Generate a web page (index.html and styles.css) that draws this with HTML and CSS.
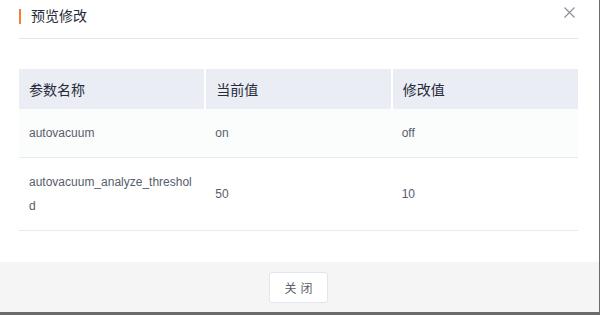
FILE: index.html
```html
<!DOCTYPE html>
<html lang="zh-CN">
<head>
  <meta charset="UTF-8" />
  <meta name="viewport" content="width=device-width, initial-scale=1.0" />
  <title>预览修改</title>
  <link rel="stylesheet" href="styles.css">
</head>
<body>
  <div class="dialog">
    <div class="dialog-header">
      <h2 class="dialog-title">预览修改</h2>
      <button class="close-btn" title="关闭">
        <svg width="11" height="11" viewBox="0 0 11 11">
          <path d="M0.5 0.5 L10.5 10.5 M10.5 0.5 L0.5 10.5" stroke="#8a8e99" stroke-width="1.1" fill="none" />
        </svg>
      </button>
    </div>

    <div class="dialog-body">
      <table class="param-table">
        <thead>
          <tr>
            <th>参数名称</th>
            <th>当前值</th>
            <th>修改值</th>
          </tr>
        </thead>
        <tbody>
          <tr class="hover">
            <td>autovacuum</td>
            <td>on</td>
            <td>off</td>
          </tr>
          <tr>
            <td>autovacuum_analyze_threshold</td>
            <td>50</td>
            <td>10</td>
          </tr>
        </tbody>
      </table>
    </div>

    <div class="dialog-footer">
      <button class="footer-btn">关闭</button>
    </div>
  </div>
</body>
</html>
```

FILE: styles.css
```css
body {
  margin: 0;
  background-color: #6b6b6b;
  font-family: 'Liberation Sans', 'Noto Sans CJK SC', sans-serif;
  color: #575d6c;
}

.dialog {
  width: 599px;
  height: 312px;
  background-color: #ffffff;
  display: flex;
  flex-direction: column;
}

.dialog-header {
  margin: 0 21px 0 19px;
  height: 38px;
  border-bottom: 1px solid #e3e5ea;
  display: flex;
  align-items: flex-start;
  justify-content: space-between;
}

.dialog-title {
  margin: 9px 0 0 0;
  padding-left: 10px;
  border-left: 2px solid #f6812f;
  font-size: 14px;
  font-weight: normal;
  line-height: 15px;
  height: 15px;
  color: #252b3a;
}

.close-btn {
  margin: 7px 3px 0 0;
  padding: 0;
  border: none;
  background: none;
  width: 11px;
  height: 11px;
  display: flex;
  cursor: pointer;
}

.dialog-body {
  flex-grow: 1;
  padding: 30px 21px 0 19px;
}

.param-table {
  width: 100%;
  table-layout: fixed;
  border-collapse: collapse;
}

.param-table th {
  height: 40px;
  padding: 0 10px;
  background-color: #eaedf4;
  border-left: 2px solid #ffffff;
  text-align: left;
  font-size: 14px;
  font-weight: normal;
  color: #252b3a;
}

.param-table th:first-child {
  border-left: none;
}

.param-table td {
  padding: 12px 10px;
  border-bottom: 1px solid #e8eaef;
  font-size: 12px;
  line-height: 24px;
  word-break: break-all;
  vertical-align: middle;
}

.param-table tr.hover td {
  background-color: #fbfcfc;
}

.dialog-footer {
  height: 50px;
  background-color: #f5f5f6;
  display: flex;
  align-items: center;
  justify-content: center;
}

.footer-btn {
  width: 59px;
  height: 31px;
  margin-left: -2px;
  background-color: #ffffff;
  border: 1px solid #e3e5ee;
  border-radius: 3px;
  font-family: 'Liberation Sans', 'Noto Sans CJK SC', sans-serif;
  font-size: 12px;
  letter-spacing: 4px;
  padding: 0 0 0 4px;
  color: #575d6c;
}
```
